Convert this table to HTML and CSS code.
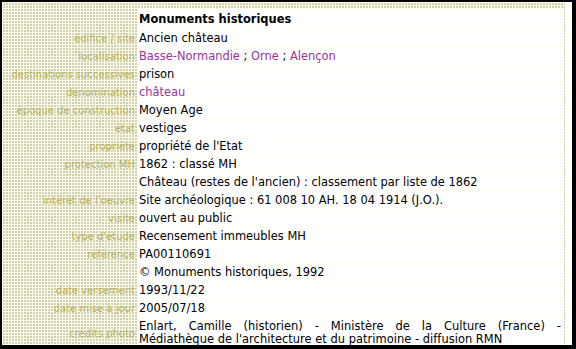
FILE: index.html
```html
<!DOCTYPE html>
<html lang="fr">
<head>
<meta charset="utf-8">
<title>Monuments historiques</title>
<link rel="stylesheet" href="styles.css">
</head>
<body>
<div class="frame">
  <div class="sheet">
    <table class="notice">
      <tr class="head">
        <th class="lab"></th>
        <th class="val">Monuments historiques</th>
      </tr>
      <tr><td class="lab">édifice / site</td><td class="val">Ancien château</td></tr>
      <tr><td class="lab">localisation</td><td class="val"><a href="#">Basse-Normandie</a> ; <a href="#">Orne</a> ; <a href="#">Alençon</a></td></tr>
      <tr><td class="lab">destinations successives</td><td class="val">prison</td></tr>
      <tr><td class="lab">dénomination</td><td class="val"><a href="#">château</a></td></tr>
      <tr><td class="lab">époque de construction</td><td class="val">Moyen Age</td></tr>
      <tr><td class="lab">état</td><td class="val">vestiges</td></tr>
      <tr><td class="lab">propriété</td><td class="val">propriété de l'Etat</td></tr>
      <tr><td class="lab">protection MH</td><td class="val">1862 : classé MH</td></tr>
      <tr><td class="lab"></td><td class="val">Château (restes de l'ancien) : classement par liste de 1862</td></tr>
      <tr><td class="lab">intérêt de l'oeuvre</td><td class="val">Site archéologique : 61 008 10 AH. 18 04 1914 (J.O.).</td></tr>
      <tr><td class="lab">visite</td><td class="val">ouvert au public</td></tr>
      <tr><td class="lab">type d'étude</td><td class="val">Recensement immeubles MH</td></tr>
      <tr><td class="lab">référence</td><td class="val">PA00110691</td></tr>
      <tr><td class="lab"></td><td class="val">© Monuments historiques, 1992</td></tr>
      <tr><td class="lab">date versement</td><td class="val">1993/11/22</td></tr>
      <tr><td class="lab">date mise à jour</td><td class="val">2005/07/18</td></tr>
      <tr><td class="lab">crédits photo</td><td class="val credit">Enlart, Camille (historien) - Ministère de la Culture (France) - Médiathèque de l'architecture et du patrimoine - diffusion RMN</td></tr>
    </table>
  </div>
</div>
</body>
</html>
```
FILE: styles.css
```css
html, body {
  margin: 0;
  padding: 0;
}
body {
  width: 576px;
  height: 349px;
  background: #000;
  overflow: hidden;
}
.frame {
  margin: 2px 0 0 2px;
  width: 570px;
  height: 343px;
  background: #fff;
  overflow: hidden;
}
.sheet {
  width: 563px;
  height: 343px;
  padding-top: 6px;
  box-sizing: border-box;
  background-color: #fffff0;
  background-image:
    linear-gradient(to right, #fffff0 1px, transparent 1px),
    linear-gradient(to bottom, #fffff0 1px, #d2d0b0 1px);
  background-size: 3px 3px;
}
.notice {
  width: 563px;
  border-collapse: separate;
  border-spacing: 1px;
  table-layout: fixed;
  font-family: "DejaVu Sans", Verdana, sans-serif;
}
.notice td, .notice th {
  padding: 0;
  vertical-align: middle;
}
.lab {
  width: 132px;
  padding-right: 1px !important;
  text-align: right;
  color: #b8b056;
  font-size: 10px;
  font-weight: normal;
  line-height: 13px;
  white-space: nowrap;
}
.val {
  background: #fff;
  color: #000;
  font-size: 11.45px;
  line-height: 13px;
  text-align: justify;
  padding: 2px 1px 2px 2px !important;
}
.val.credit {
  padding-right: 3px !important;
  letter-spacing: 0.03px;
}
.head .val {
  font-weight: bold;
  text-align: left;
  padding: 4px 1px 3px 2px !important;
}
a {
  color: #993399;
  text-decoration: none;
}
```
